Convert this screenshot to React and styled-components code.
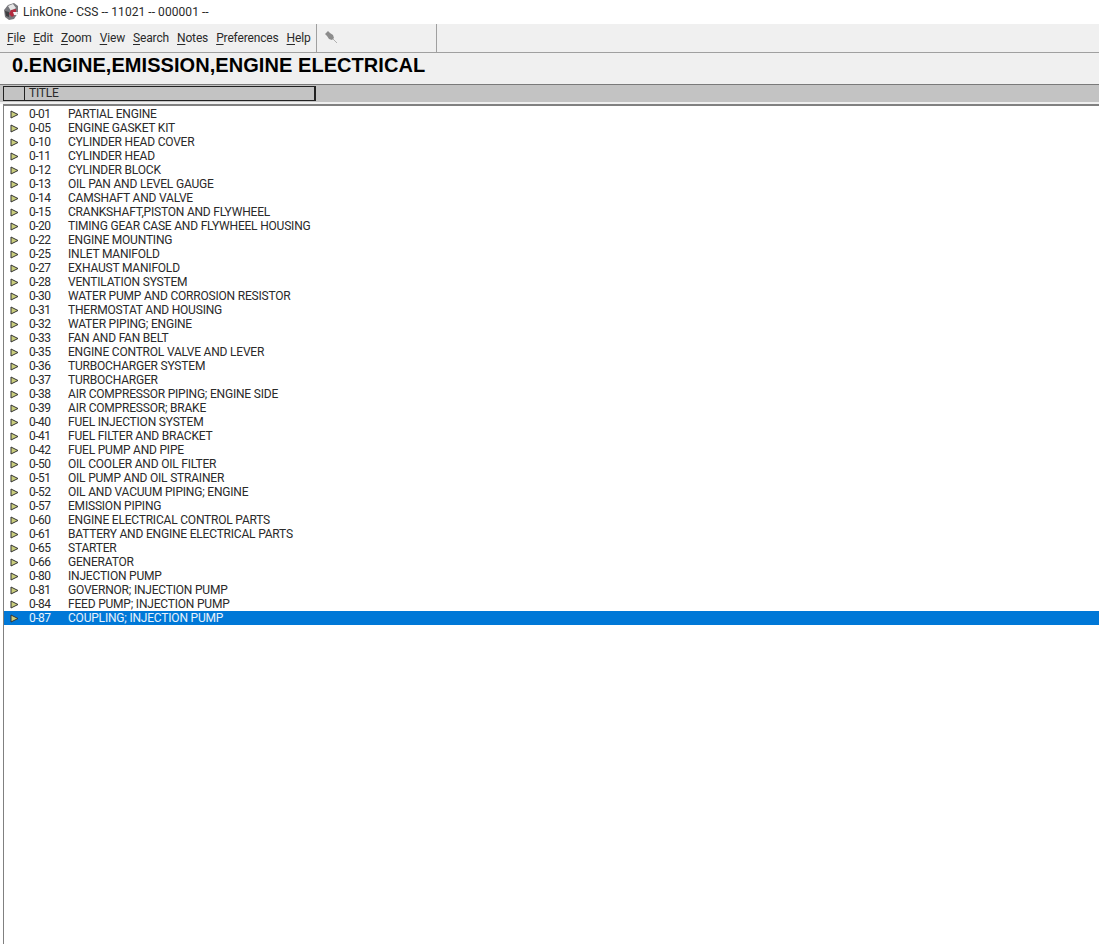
import styled, { createGlobalStyle } from "styled-components";

const GlobalStyle = createGlobalStyle`
  html, body {
    margin: 0;
    padding: 0;
    background: #fff;
    overflow: hidden;
  }
  body {
    font-family: Roboto, "Noto Sans", sans-serif;
    font-size: 12px;
    font-variant-ligatures: none;
    color: #000;
  }
`;

const Window = styled.div`
  width: 1099px;
  height: 944px;
  display: flex;
  flex-direction: column;
  overflow: hidden;
`;

// Title bar
const TitleBar = styled.div`
  height: 24px;
  display: flex;
  align-items: center;
  padding-left: 3px;
  gap: 4px;
  background: #fff;
  font-size: 12px;
  letter-spacing: 0.06px;
  color: #2a2a2a;
`;

// Menu bar
const MenuBar = styled.div`
  height: 28px;
  display: flex;
  background: #f0f0f0;
  border-bottom: 1px solid #a0a0a0;
`;
const Menus = styled.div`
  width: 317px;
  display: flex;
  align-items: center;
  padding-left: 7px;
  gap: 8px;
  box-sizing: border-box;
  border-right: 1px solid #a0a0a0;
  letter-spacing: -0.15px;
`;
const MenuItem = styled.span`
  color: #2a2a2a;
  u {
    text-underline-offset: 2px;
  }
`;
const Tools = styled.div`
  width: 120px;
  display: flex;
  align-items: center;
  padding-left: 7px;
  box-sizing: border-box;
  border-right: 1px solid #a0a0a0;
`;

// Section heading
const Heading = styled.h1`
  margin: 0;
  height: 31px;
  padding: 0 0 0 12px;
  background: #f0f0f0;
  font-family: "Liberation Sans", Arial, sans-serif;
  font-size: 20px;
  line-height: 24px;
  font-weight: 700;
  letter-spacing: 0.06px;
  color: #000;
`;

// Column header
const HeaderStrip = styled.div`
  height: 20px;
  box-sizing: border-box;
  background: #c3c3c3;
  border-top: 1px solid #7a7a7a;
  border-bottom: 2px solid #f0f0f0;
`;
const HeaderCells = styled.div`
  width: 313px;
  height: 15px;
  margin: 1px 0 0 3px;
  display: flex;
  box-sizing: border-box;
  border: 1px solid #222;
  border-width: 1px 2px 1px 1px;
`;
const HeaderKey = styled.div`
  width: 20px;
  border-right: 1px solid #222;
`;
const HeaderTitle = styled.div`
  padding-left: 4px;
  line-height: 12px;
  letter-spacing: -0.2px;
  color: #2a2a2a;
`;

// Parts list
const List = styled.div`
  flex: 1;
  box-sizing: border-box;
  padding-top: 1px;
  margin-left: 3px;
  border-top: 2px solid #808080;
  border-left: 1px solid #808080;
  background: #fff;
`;
const Row = styled.div`
  height: 14px;
  display: flex;
  align-items: center;
  line-height: 14px;
  color: ${(props) => (props.$selected ? "#e8f2fb" : "#2a2a2a")};
  background: ${(props) => (props.$selected ? "#0078d7" : "transparent")};
`;
const Marker = styled.svg`
  width: 9px;
  height: 9px;
  margin-left: 6px;
  flex: none;
`;
const Code = styled.span`
  width: 39px;
  margin-left: 10px;
  flex: none;
  letter-spacing: -0.5px;
`;
const Name = styled.span`
  white-space: nowrap;
  letter-spacing: -0.2px;
`;

const rows = [
  ["0-01", "PARTIAL ENGINE"],
  ["0-05", "ENGINE GASKET KIT"],
  ["0-10", "CYLINDER HEAD COVER"],
  ["0-11", "CYLINDER HEAD"],
  ["0-12", "CYLINDER BLOCK"],
  ["0-13", "OIL PAN AND LEVEL GAUGE"],
  ["0-14", "CAMSHAFT AND VALVE"],
  ["0-15", "CRANKSHAFT,PISTON AND FLYWHEEL"],
  ["0-20", "TIMING GEAR CASE AND FLYWHEEL HOUSING"],
  ["0-22", "ENGINE MOUNTING"],
  ["0-25", "INLET MANIFOLD"],
  ["0-27", "EXHAUST MANIFOLD"],
  ["0-28", "VENTILATION SYSTEM"],
  ["0-30", "WATER PUMP AND CORROSION RESISTOR"],
  ["0-31", "THERMOSTAT AND HOUSING"],
  ["0-32", "WATER PIPING; ENGINE"],
  ["0-33", "FAN AND FAN BELT"],
  ["0-35", "ENGINE CONTROL VALVE AND LEVER"],
  ["0-36", "TURBOCHARGER SYSTEM"],
  ["0-37", "TURBOCHARGER"],
  ["0-38", "AIR COMPRESSOR PIPING; ENGINE SIDE"],
  ["0-39", "AIR COMPRESSOR; BRAKE"],
  ["0-40", "FUEL INJECTION SYSTEM"],
  ["0-41", "FUEL FILTER AND BRACKET"],
  ["0-42", "FUEL PUMP AND PIPE"],
  ["0-50", "OIL COOLER AND OIL FILTER"],
  ["0-51", "OIL PUMP AND OIL STRAINER"],
  ["0-52", "OIL AND VACUUM PIPING; ENGINE"],
  ["0-57", "EMISSION PIPING"],
  ["0-60", "ENGINE ELECTRICAL CONTROL PARTS"],
  ["0-61", "BATTERY AND ENGINE ELECTRICAL PARTS"],
  ["0-65", "STARTER"],
  ["0-66", "GENERATOR"],
  ["0-80", "INJECTION PUMP"],
  ["0-81", "GOVERNOR; INJECTION PUMP"],
  ["0-84", "FEED PUMP; INJECTION PUMP"],
  ["0-87", "COUPLING; INJECTION PUMP"],
];

const menus = [
  ["F", "ile"],
  ["E", "dit"],
  ["Z", "oom"],
  ["V", "iew"],
  ["S", "earch"],
  ["N", "otes"],
  ["P", "references"],
  ["H", "elp"],
];

const AppIcon = () => (
  <svg width="16" height="18" viewBox="0 0 16 18">
    <path d="M1 7 L5 2 L11 0 L15 3 L15 10 L11 16 L6 17 L2 14 Z" fill="#77777c" />
    <path d="M5 3 L10 1 L13 5 L8 8 Z" fill="#e6e6e6" />
    <path d="M8 7 L13 6 L13 11 L9 14 L6 11 Z" fill="#b22a3e" />
    <path d="M2 8 L6 9 L6 14 L3 13 Z" fill="#3f3f42" />
    <path d="M10 9 L15 9 L14 12 L11 12 Z" fill="#f2f2f2" />
  </svg>
);

const PinIcon = () => (
  <svg width="16" height="16" viewBox="0 0 16 16">
    <path d="M1 4 L4 1 L6 3 L9 5 L10 8 L8 10 L5 9 L3 6 Z" fill="#8c8c8c" />
    <path d="M9 9 L13 13" stroke="#b0b0b0" strokeWidth="1" fill="none" />
  </svg>
);

const RowMarker = () => (
  <Marker viewBox="0 0 9 9">
    <path d="M1 1 L8 4.5 L1 8 Z" fill="#c9cd7c" stroke="#333" strokeWidth="1" />
  </Marker>
);

const App = () => {
  return (
    <>
      <GlobalStyle />
      <Window>
        <TitleBar>
          <AppIcon />
          LinkOne - CSS -- 11021 -- 000001 --
        </TitleBar>
        <MenuBar>
          <Menus>
            {menus.map(([key, rest]) => (
              <MenuItem key={key}>
                <u>{key}</u>
                {rest}
              </MenuItem>
            ))}
          </Menus>
          <Tools>
            <PinIcon />
          </Tools>
        </MenuBar>
        <Heading>0.ENGINE,EMISSION,ENGINE ELECTRICAL</Heading>
        <HeaderStrip>
          <HeaderCells>
            <HeaderKey />
            <HeaderTitle>TITLE</HeaderTitle>
          </HeaderCells>
        </HeaderStrip>
        <List>
          {rows.map(([code, name], i) => (
            <Row key={code} $selected={i === rows.length - 1}>
              <RowMarker />
              <Code>{code}</Code>
              <Name>{name}</Name>
            </Row>
          ))}
        </List>
      </Window>
    </>
  );
};

export default App;
